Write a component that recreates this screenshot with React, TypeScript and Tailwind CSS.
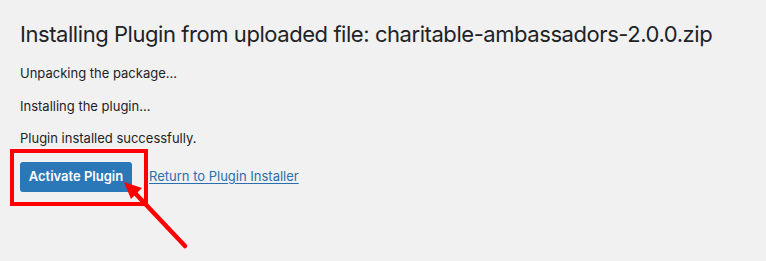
export default function App() {
  return (
    <div className="relative w-[766px] h-[261px] overflow-hidden bg-[#f1f1f1] text-[#1d2327] font-['Inter','Liberation_Sans',sans-serif]">
      <div className="pl-5 pt-[19px]">
        <h1 className="whitespace-nowrap text-[22px] leading-[30px] font-normal tracking-[-0.02em]">
          Installing Plugin from uploaded file: charitable-ambassadors-2.0.0.zip
        </h1>
        <p className="mt-[15px] text-[13px] leading-[19.5px]">Unpacking the package…</p>
        <p className="mt-[13px] text-[13px] leading-[19.5px]">Installing the plugin…</p>
        <p className="mt-[13px] text-[13px] leading-[19.5px]">Plugin installed successfully.</p>
        <div className="mt-[13px] flex items-center gap-[17px]">
          <button className="w-[112px] h-[30px] rounded-[3px] bg-[#2a78b8] text-white text-[13px] font-semibold">
            Activate Plugin
          </button>
          <a href="#" className="text-[13px] text-[#2a6fad] underline underline-offset-2">
            Return to Plugin Installer
          </a>
        </div>
      </div>

      <div className="absolute left-[10px] top-[149px] w-[138px] h-[57px] border-4 border-[#ff0000]" />

      <svg className="absolute left-0 top-0" width="766" height="261" viewBox="0 0 766 261">
        <line x1="185" y1="246" x2="134" y2="192" stroke="#ff0000" strokeWidth="4.5" strokeLinecap="round" />
        <polygon points="124,182 142,188 131,199" fill="#ff0000" />
      </svg>
    </div>
  );
}
